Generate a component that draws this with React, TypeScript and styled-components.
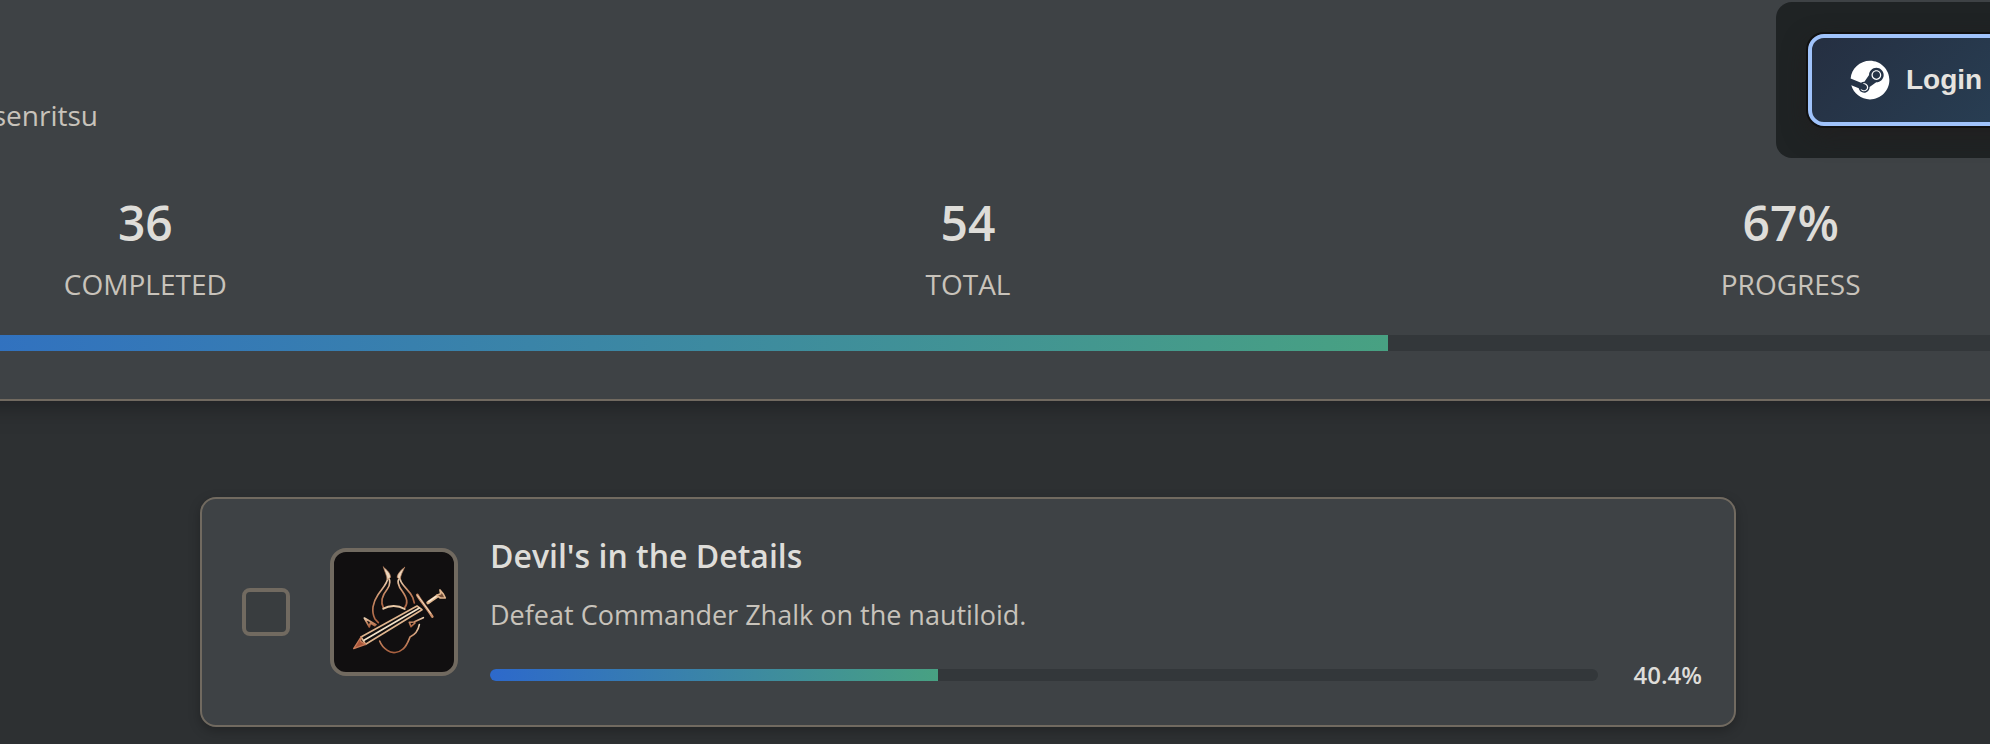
import React from "react";
import styled, { createGlobalStyle } from "styled-components";
import { FaSteam } from "react-icons/fa";

const GlobalStyle = createGlobalStyle`
  *, *::before, *::after { box-sizing: border-box; }
  body {
    margin: 0;
    background: #2d3032;
    color: #deddd9;
    font-family: "Open Sans", "Noto Sans", sans-serif;
  }
`;

const Viewport = styled.div`
  min-height: 100vh;
  overflow: hidden;
`;

/* The page runs past both window edges. */
const Page = styled.div`
  margin: 0 -212px 0 -266px;
`;

const Header = styled.header`
  padding: 2px 0 48px;
  border-bottom: 2px solid #716a60;
  background: #3e4245;
  box-shadow: 0 4px 24px rgba(0, 0, 0, 0.35);
`;

const TopRow = styled.div`
  display: flex;
  justify-content: space-between;
  align-items: flex-start;
`;

const Byline = styled.p`
  width: 364px;
  margin: 0;
  padding-top: 93px;
  text-align: right;
  font-size: 28px;
  line-height: 40px;
  color: #c8c3bb;
`;

const LoginPanel = styled.div`
  width: 426px;
  padding: 36px;
  border-radius: 16px;
  background: #1f2324;
`;

const LoginButton = styled.button`
  display: flex;
  align-items: center;
  gap: 16px;
  width: 100%;
  height: 84px;
  padding: 0 38px;
  border: 0;
  border-radius: 12px;
  outline: 4px solid #a0c3fb;
  box-shadow: 0 0 0 6px #111111, 0 8px 24px 4px rgba(34, 30, 30, 0.8);
  background: linear-gradient(135deg, #252f41, #2a475e);
  color: #e6e3df;
  font: bold 28px/32px "Liberation Sans", Arial, sans-serif;
  cursor: pointer;

  svg { width: 40px; height: 40px; color: #ffffff; }
`;

const Stats = styled.dl`
  display: grid;
  grid-template-columns: repeat(3, 1fr);
  margin: 32px 0 31px;
  text-align: center;
`;

const Stat = styled.div`
  display: flex;
  flex-direction: column-reverse;
  gap: 8px;
`;

const StatLabel = styled.dt`
  font-size: 28px;
  line-height: 40px;
  text-transform: uppercase;
  color: #c8c3bb;
`;

const StatValue = styled.dd`
  margin: 0;
  font-size: 48px;
  font-weight: 600;
  line-height: 66px;
`;

const Track = styled.div<{ $height: number; $rounded?: boolean }>`
  flex: 1;
  height: ${(p) => p.$height}px;
  overflow: hidden;
  border-radius: ${(p) => (p.$rounded ? p.$height / 2 : 0)}px;
  background: #33373a;
`;

const Fill = styled.div`
  height: 100%;
  background: linear-gradient(90deg, #2d69cb, #48a182);
`;

const List = styled.main`
  max-width: 1600px;
  margin: 0 auto;
  padding: 96px 32px 0;
`;

const Card = styled.article`
  display: flex;
  align-items: center;
  gap: 32px;
  padding: 30px 32px 30px 40px;
  border: 2px solid #716a60;
  border-radius: 16px;
  background: #3e4245;
  box-shadow: 0 4px 12px rgba(0, 0, 0, 0.25);
`;

const Checkbox = styled.input`
  appearance: none;
  flex: none;
  width: 48px;
  height: 48px;
  margin: 0 8px 0 0;
  border: 4px solid #716a60;
  border-radius: 8px;
  background: #393d3f;
`;

const Artwork = styled.svg`
  flex: none;
  width: 128px;
  height: 128px;
  border: 4px solid #716a60;
  border-radius: 16px;
  background: #110f10;
`;

const Details = styled.div`
  flex: 1;
  min-width: 0;
`;

const Title = styled.h2`
  margin: 0;
  font-size: 32px;
  font-weight: 600;
  line-height: 54px;
`;

const Description = styled.p`
  margin: 10px 0 18px;
  font-size: 27px;
  line-height: 44px;
  color: #c8c3bb;
`;

const Rarity = styled.div`
  display: flex;
  align-items: center;
  gap: 24px;
`;

const Percent = styled.span`
  min-width: 80px;
  text-align: right;
  font-size: 24px;
  font-weight: 600;
  line-height: 40px;
`;

const stats = [
  { label: "Completed", value: "36" },
  { label: "Total", value: "54" },
  { label: "Progress", value: "67%" },
];

function SwordAndHorns() {
  return (
    <Artwork viewBox="42 66 360 360" fill="none" strokeLinecap="round" strokeLinejoin="round" aria-hidden="true">
      <defs>
        <linearGradient id="copper" x1="0" y1="0" x2="0" y2="1">
          <stop offset="0" stopColor="#ecd2b4" />
          <stop offset="0.45" stopColor="#c98d68" />
          <stop offset="1" stopColor="#a9603f" />
        </linearGradient>
      </defs>
      <g stroke="url(#copper)" strokeWidth="5">
        <path d="M203 144 C212 146 211 165 202 177 C186 197 180 214 190 233" />
        <path d="M239 146 C231 150 233 166 247 184 C262 206 265 220 253 235" />
        <path d="M190 236 C208 225 234 225 254 237" stroke="#e8c7a4" strokeWidth="6" />
        <path d="M203 144 C204 158 188 174 174 194 C158 217 153 245 165 267 L175 278" />
        <path d="M241 149 C245 168 266 177 278 202 L283 219" />
        <path d="M168 284 L133 264 L148 291 L151 279 L165 287" />
        <path d="M310 263 L282 276 L268 277 L273 290 L285 279" />
        <path d="M298 284 C294 306 283 315 270 321 C264 336 260 348 249 357 C236 369 216 372 202 361 C190 353 183 344 179 333" />
      </g>
      <g fill="#ecd6bd" stroke="#b87c58" strokeWidth="2">
        <path d="M190 111 C201 121 211 128 212 142 L202 149 C200 136 194 124 190 111 Z" />
        <path d="M254 112 C244 120 234 128 231 142 L241 149 C241 136 249 124 254 112 Z" />
      </g>
      <g stroke="#dfb58e" strokeWidth="5">
        <path d="M123 321 L291 228 L306 239 L137 343 Z" fill="#110f10" />
        <path d="M132 331 L298 234" stroke="#f3e2c8" />
        <path d="M123 321 L101 356 L137 343 L122 334 Z" fill="#a9573b" stroke="#c77b59" strokeWidth="4" />
        <path d="M292 195 C302 213 321 233 337 260" strokeWidth="8" stroke="#c98d68" />
        <path d="M293 197 L332 250" strokeWidth="3" stroke="#f3e2c8" />
        <path d="M324 218 L351 199" strokeWidth="10" />
        <path d="M326 215 L350 198" strokeWidth="4" stroke="#f8ecd8" />
        <path d="M360 180 L362 191 L350 196 L361 204 L376 204 L370 192 Z" strokeWidth="5" fill="#75503b" />
      </g>
    </Artwork>
  );
}

export default function App() {
  return (
    <Viewport>
      <GlobalStyle />
      <Page>
        <Header>
          <TopRow>
            <Byline>senritsu</Byline>
            <LoginPanel>
              <LoginButton type="button">
                <FaSteam aria-hidden="true" />
                Login
              </LoginButton>
            </LoginPanel>
          </TopRow>
          <Stats>
            {stats.map((s) => (
              <Stat key={s.label}>
                <StatLabel>{s.label}</StatLabel>
                <StatValue>{s.value}</StatValue>
              </Stat>
            ))}
          </Stats>
          <Track $height={16}>
            <Fill style={{ width: "67%" }} />
          </Track>
        </Header>
        <List>
          <Card>
            <Checkbox type="checkbox" aria-labelledby="achievement-title" />
            <SwordAndHorns />
            <Details>
              <Title id="achievement-title">Devil's in the Details</Title>
              <Description>Defeat Commander Zhalk on the nautiloid.</Description>
              <Rarity>
                <Track $height={12} $rounded>
                  <Fill style={{ width: "40.4%" }} />
                </Track>
                <Percent>40.4%</Percent>
              </Rarity>
            </Details>
          </Card>
        </List>
      </Page>
    </Viewport>
  );
}
